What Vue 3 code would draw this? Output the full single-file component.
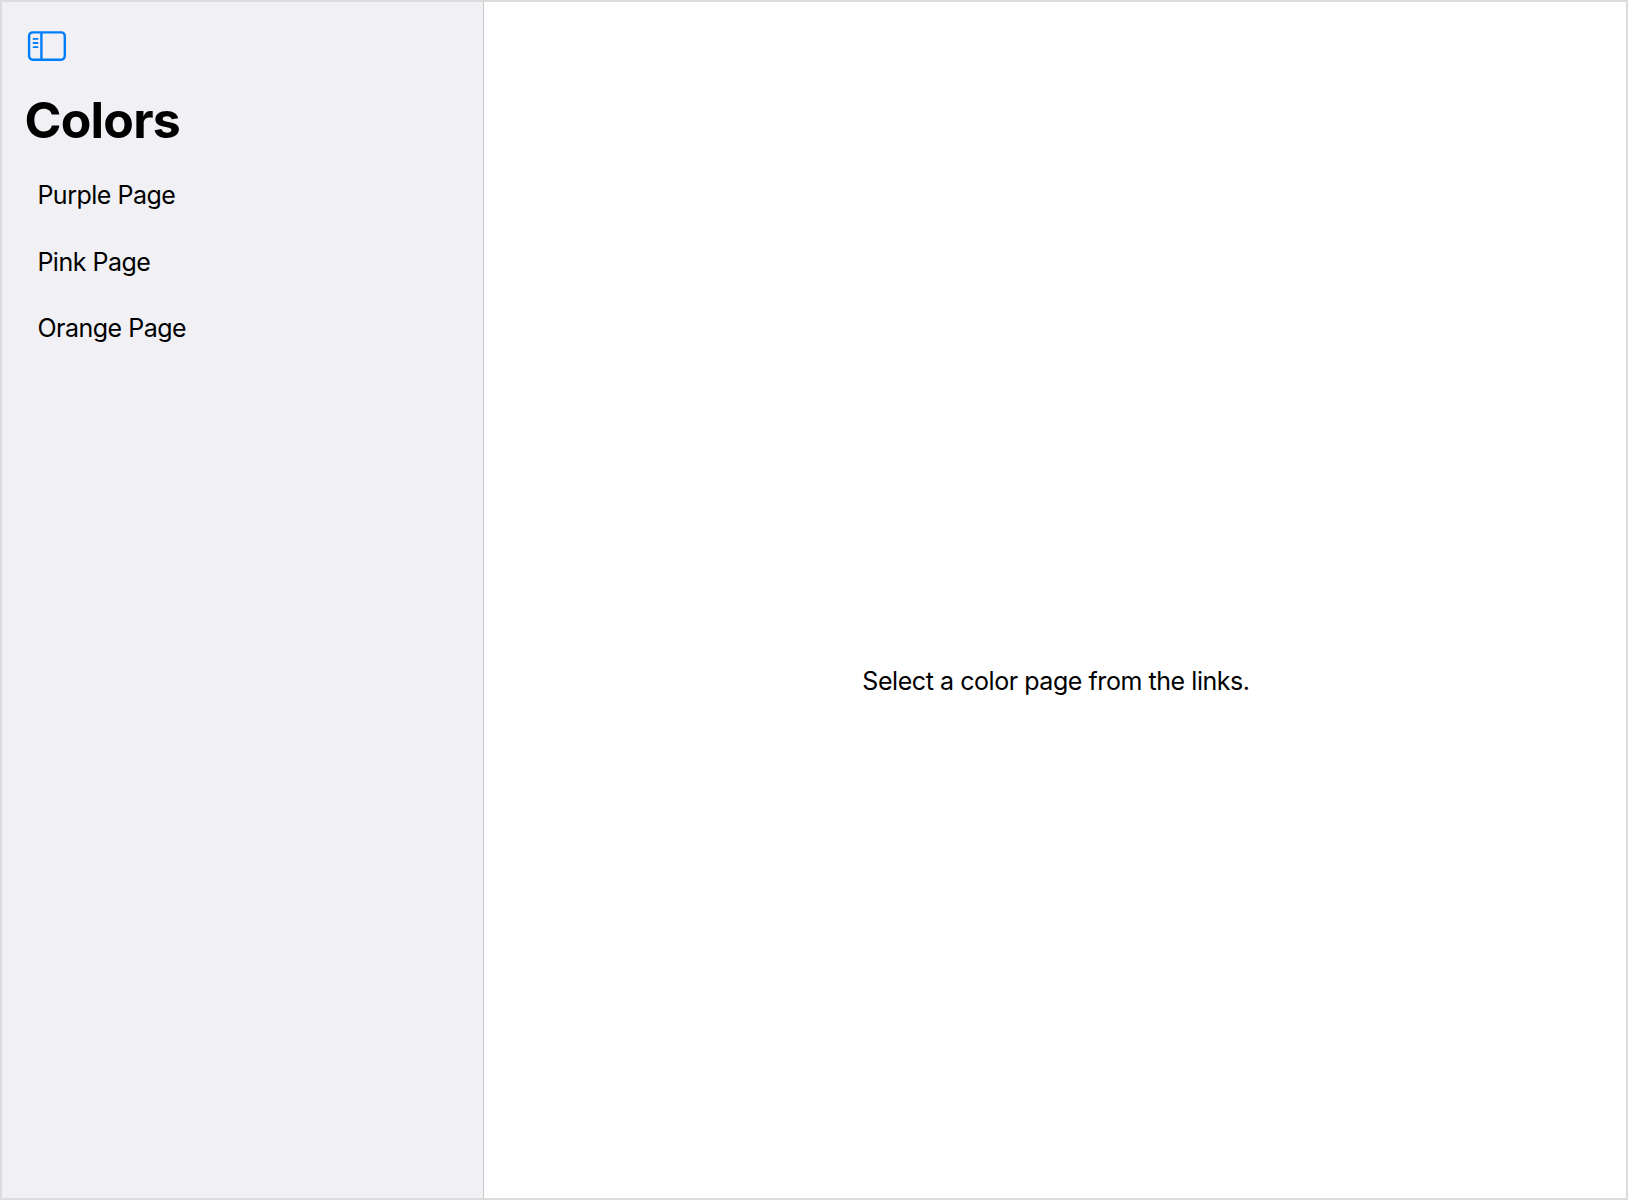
<script setup>
const pages = ['Purple Page', 'Pink Page', 'Orange Page']
</script>

<template>
  <div class="window">
    <aside class="sidebar">
      <button class="toggle" aria-label="Toggle sidebar">
        <svg width="40" height="32" viewBox="0 0 40 32" fill="none" stroke="#007dfa">
          <rect x="3.1" y="2.4" width="35.7" height="27.3" rx="3.6" stroke-width="2.4" />
          <path d="M15.4 2.3v27.5" stroke-width="2.4" />
          <path d="M7.5 8.9h4.1M7.5 13h4.1M7.5 17.1h4.1" stroke-width="1.8" stroke-linecap="round" />
        </svg>
      </button>
      <h1>Colors</h1>
      <nav>
        <a v-for="page in pages" :key="page">{{ page }}</a>
      </nav>
    </aside>
    <main class="detail"><p>Select a color page from the links.</p></main>
  </div>
</template>

<style>
body { margin: 0; }
</style>

<style scoped>
.window {
  box-sizing: border-box;
  width: 1628px;
  height: 1200px;
  display: flex;
  border: 2px solid #dcdcdc;
  background: #fff;
  color: #000;
  font-family: Inter, sans-serif;
}
.sidebar {
  box-sizing: border-box;
  width: 482px;
  padding: 28px 24px;
  background: #f0f0f5;
  border-right: 1px solid #c8c8cc;
}
.toggle { display: block; padding: 0; border: 0; background: none; height: 32px; }
.toggle svg { display: block; }
h1 { margin: 28px 0 0 -1.5px; font-size: 50px; line-height: 60px; font-weight: 700; letter-spacing: -0.8px; }
nav { display: flex; flex-direction: column; margin-top: 12px; padding-left: 11.4px; }
nav a { font-size: 25px; line-height: 66.5px; letter-spacing: -0.5px; }
.detail { flex: 1; display: flex; align-items: center; justify-content: center; padding: 161px 0 0 2px; }
.detail p { margin: 0; font-size: 25px; line-height: 32px; letter-spacing: -0.445px; white-space: nowrap; }
</style>
